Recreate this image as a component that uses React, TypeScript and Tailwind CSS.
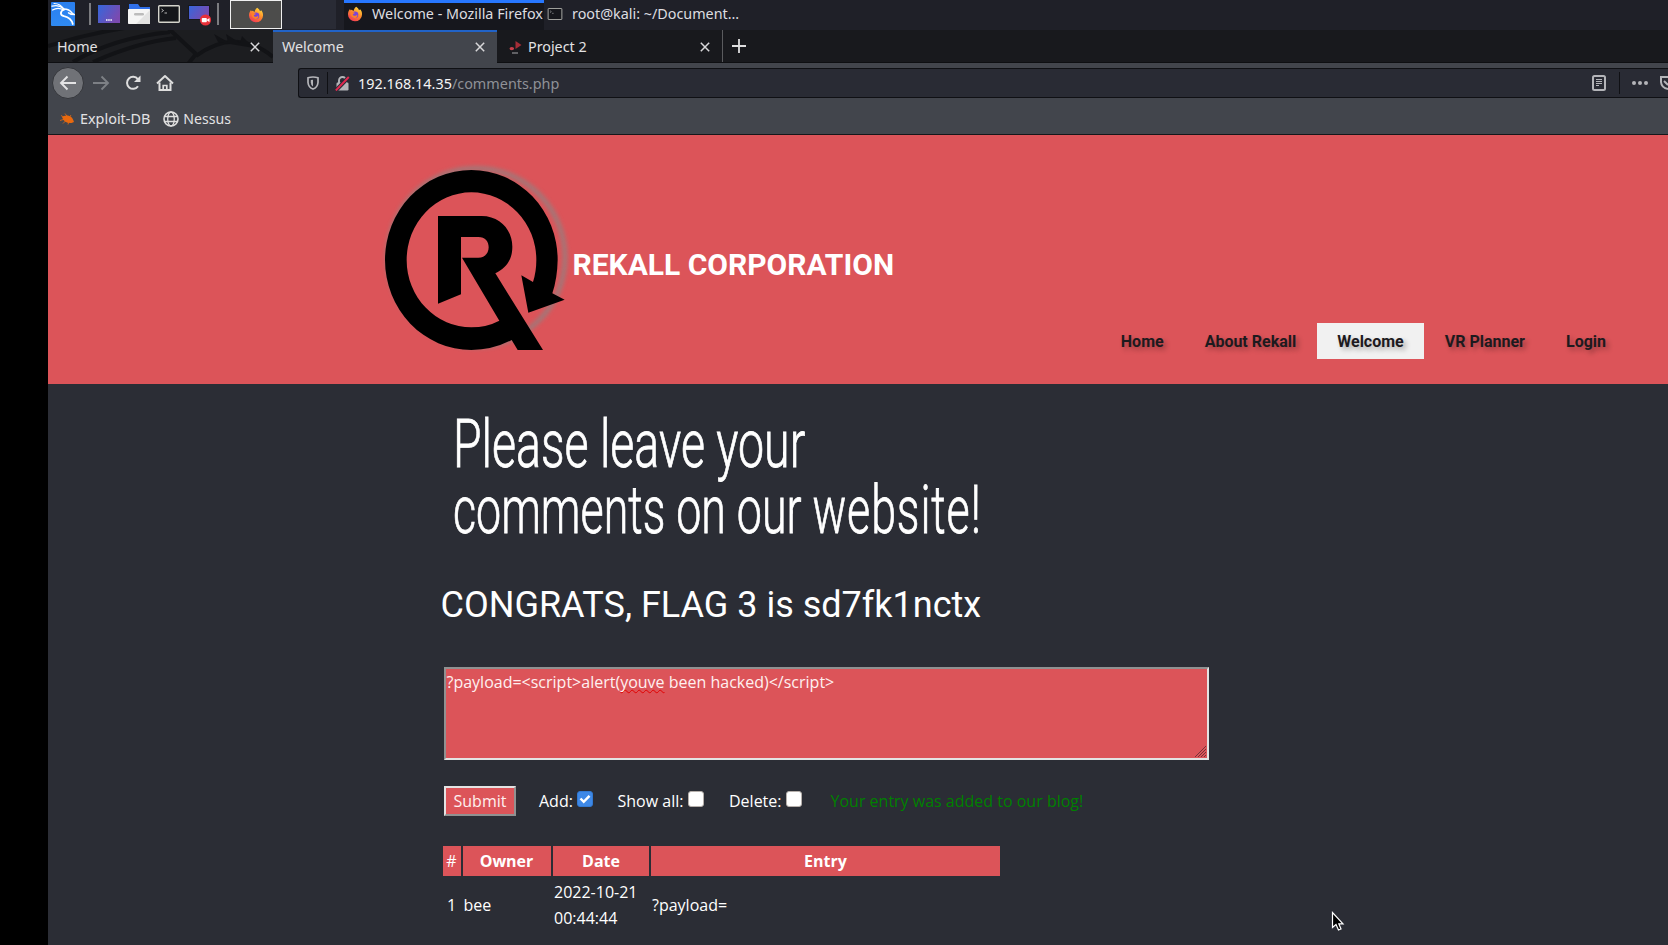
import React from "react";

const UI = "font-['Noto_Sans',sans-serif]";

function Kali() {
  return (
    <svg width="24" height="24" viewBox="0 0 24 24" className="shrink-0">
      <defs>
        <linearGradient id="kb" x1="0" y1="0" x2="0" y2="1">
          <stop offset="0" stopColor="#2a7fee" />
          <stop offset="1" stopColor="#2f8af5" />
        </linearGradient>
      </defs>
      <rect width="24" height="24" rx="1" fill="url(#kb)" />
      <g fill="none" stroke="#fff" strokeLinecap="round">
        <path d="M1 4.2C5 3 9 3.5 12.5 6.5" strokeWidth="1.3" />
        <path d="M3 1.5C8 1.5 11 4 13 7.5" strokeWidth="1.1" />
        <path d="M1.5 8C5.5 5.5 9.5 6 13 8" strokeWidth="1.3" />
        <path d="M12.8 7.5C9 9.5 8.8 13 13 14.2C17.5 15.3 20.5 17 21.8 22" strokeWidth="1.8" />
        <path d="M12 7C16 6.8 19 8 21 11L23 12.5L20 12.2L17.5 10.8" strokeWidth="1.5" />
      </g>
    </svg>
  );
}

function Desktop({ rec = false }: { rec?: boolean }) {
  return (
    <svg width="24" height="24" viewBox="0 0 24 24" className="shrink-0">
      <defs>
        <linearGradient id="dk" x1="0" y1="0" x2="1" y2="0.5">
          <stop offset="0" stopColor="#3567dc" />
          <stop offset="1" stopColor="#7a4ab0" />
        </linearGradient>
      </defs>
      {rec ? (
        <>
          <rect x=".5" y="3.500" width="21" height="14" fill="url(#dk)" stroke="#16171d" />
          <circle cx="17.500" cy="18" r="5.600" fill="#e8303a" />
          <rect x="13.800" y="16" width="5" height="4.200" rx=".8" fill="#fff" />
          <path d="M18.500 18L21.500 16V20.200Z" fill="#fff" />
        </>
      ) : (
        <>
          <rect y="3" width="22" height="18" fill="url(#dk)" />
          <path d="M8 18h6" stroke="#fff" strokeWidth="1.6" strokeDasharray="1.500 .7" />
        </>
      )}
    </svg>
  );
}

function Folder() {
  return (
    <svg width="24" height="24" viewBox="0 0 24 24" className="shrink-0">
      <path d="M1 2h9l2 3h10v5H1z" fill="#2f6fe8" />
      <rect y="7" width="22" height="15" rx=".8" fill="#f5f5f5" />
      <path d="M22 8v14H8z" fill="#e3e3e3" />
      <rect x="6" y="11" width="10" height="2.500" rx="1.200" fill="#bcbcbc" />
    </svg>
  );
}

function Term({ w, h }: { w: number; h: number }) {
  return (
    <svg width={w} height={h} viewBox="0 0 22 18" className="shrink-0">
      <rect x=".7" y=".7" width="20.600" height="16.600" rx=".8" fill="#14161a" stroke="#d4d4cc" strokeWidth="1.400" />
      <path d="M3.500 4l2 1.500l-2 1.500M6.500 8h2.500" fill="none" stroke="#c8c8c8" strokeWidth=".9" />
    </svg>
  );
}

function Firefox() {
  return (
    <svg width="16" height="16" viewBox="0 0 16 16" className="shrink-0">
      <defs>
        <linearGradient id="ff" x1=".8" y1="0" x2=".2" y2="1">
          <stop offset="0" stopColor="#ffe13e" />
          <stop offset=".45" stopColor="#ff8a2a" />
          <stop offset="1" stopColor="#f0325a" />
        </linearGradient>
      </defs>
      <path d="M9.200 .8C11 2 11.800 3.300 12 4.200C12.800 4 13 3.500 12.900 3C14.500 4.600 15.200 6.500 15 8.700A7 6.700 0 0 1 1 8.500C.9 6.500 1.700 4.400 3 2.900L3.500 4.300L4.800 3.800L6.500 5C7 3.200 7.800 1.800 9.200 .8Z" fill="url(#ff)" />
      <circle cx="8" cy="8.800" r="3.300" fill="#7a45d8" />
      <path d="M3.500 6.500C5 5.500 6.500 6 7.800 6.700C7.500 8 5.800 7.500 5.800 8.700C7 10.500 9.500 10 10 8.500C11 10 9.500 12.200 7.500 12C5 11.800 3.400 9.500 3.500 6.500Z" fill="#ff8226" />
    </svg>
  );
}

function Close() {
  return (
    <svg width="10" height="10" viewBox="0 0 10 10" className="shrink-0">
      <path d="M.8 .8l8.400 8.400M9.200 .8L.8 9.200" stroke="#d8d8da" strokeWidth="1.500" />
    </svg>
  );
}

function TaskBar() {
  return (
    <div className="flex h-[30px] bg-[#1f2028] text-[14.35px] leading-[27px] text-[#dddde0]">
      <div className="flex w-[182px] pt-[2px] pl-[3px]">
        <Kali />
        <div className="mt-[1px] ml-[14px] h-[22px] w-[2px] bg-[#7b7c80]" />
        <div className="ml-[7px] flex gap-[6px]">
          <Desktop />
          <Folder />
          <div className="w-6 pt-[3px]">
            <Term w={22} h={18} />
          </div>
          <Desktop rec />
        </div>
        <div className="mt-[1px] ml-[5px] h-[22px] w-[2px] bg-[#7b7c80]" />
      </div>
      <div className="flex h-[29px] w-[52px] items-center justify-center border border-[#f0f0f0] bg-[#4c4c4b]">
        <Firefox />
      </div>
      <div className="h-[29px] w-[54px] bg-[#292b35]" />
      <div className="ml-2 flex w-[200px] border-t-[3px] border-[#2777ff] bg-[#16171d] pl-[3px]">
        <div className="mt-[3px]">
          <Firefox />
        </div>
        <span className="-mt-[3px] ml-[9px] whitespace-nowrap">Welcome - Mozilla Firefox</span>
      </div>
      <div className="flex pl-[3px]">
        <div className="mt-[8px] opacity-80">
          <Term w={16} h={12} />
        </div>
        <span className="ml-[9px] whitespace-nowrap">root@kali: ~/Document…</span>
      </div>
    </div>
  );
}

function Tabs() {
  return (
    <div className="flex h-[33px] border-b border-[#0e0f12] bg-[#18191d] text-[14.3px] leading-[33px] text-[#e2e2e4]">
      <div className="relative flex w-[225px] items-center justify-between overflow-hidden bg-[#1c1d20] pr-[13px] pl-[9px]">
        <svg className="absolute inset-0" width="225" height="32" viewBox="0 0 225 32" fill="none">
          <path d="M0 16Q45 2 90 -4M25 32Q65 8 122 2M45 32Q90 12 128 8M120 -2L148 24L140 34M148 26Q170 10 190 12Q210 14 225 27" stroke="#121316" strokeWidth="4" />
          <path d="M170 12l-4-8l14 8l-2-8l14 9l2-7l12 12" fill="#121316" />
        </svg>
        <span className="relative">Home</span>
        <span className="relative mt-px">
          <Close />
        </span>
      </div>
      <div className="-mb-px flex w-[224px] items-center justify-between border-t-2 border-[#2163c8] bg-[#42454c] pr-[12px] pl-[9px]">
        <span className="-mt-[2px]">Welcome</span>
        <span className="-mt-px">
          <Close />
        </span>
      </div>
      <div className="flex w-[226px] items-center border-r border-[#5a5b5e] pr-[12px] pl-[12px]">
        <svg width="14" height="14" viewBox="0 0 14 14" className="mt-1">
          <path d="M6.500 0L12.500 4L6.500 8Z" fill="#a52d37" />
          <ellipse cx="2.800" cy="7.600" rx="2.300" ry="1.700" fill="#c8404c" />
          <path d="M3 12h6" stroke="#a8a8ac" />
        </svg>
        <span className="ml-[5px]">Project 2</span>
        <span className="mt-px ml-auto">
          <Close />
        </span>
      </div>
      <svg width="14" height="14" viewBox="0 0 14 14" className="mt-[9px] ml-[9px]">
        <path d="M7 0v14M0 7h14" stroke="#dededf" strokeWidth="1.800" />
      </svg>
    </div>
  );
}

function Toolbar() {
  return (
    <div className="flex h-[40px] items-center bg-[#42454c] pl-1">
      <div className="flex h-8 w-8 items-center justify-center rounded-full border border-[#34363b] bg-[#707277]">
        <svg width="18" height="16" viewBox="0 0 18 16" fill="none" stroke="#e4e4e5" strokeWidth="1.900">
          <path d="M17 8H2M8.500 1.500L2 8l6.500 6.500" />
        </svg>
      </div>
      <svg width="18" height="16" viewBox="0 0 18 16" className="ml-[8px]" fill="none" stroke="#7d8085" strokeWidth="1.900">
        <path d="M1 8h15M9.500 1.500L16 8l-6.500 6.500" />
      </svg>
      <svg width="18" height="16" viewBox="0 0 18 16" className="ml-[15px]" fill="none" stroke="#dedede" strokeWidth="2">
        <path d="M13 11.200A6 6 0 1 1 12.800 4.200" />
        <path d="M15.500 .5V7H9z" fill="#dedede" stroke="none" />
      </svg>
      <svg width="18" height="18" viewBox="0 0 18 18" className="ml-[13px]" fill="none" stroke="#dedede" strokeWidth="2">
        <path d="M1 9.500L9 2l8 7.500" strokeLinejoin="round" />
        <path d="M3.500 8.500V16h11V8.500" />
        <path d="M7.200 17v-5.500h3.600V17" strokeWidth="1.700" />
      </svg>
      <div className="ml-[124px] flex h-[30px] flex-1 items-center rounded-l-[3px] border border-r-0 border-[#0f1014] bg-[#292b34]">
        <svg width="12" height="14" viewBox="0 0 12 14" className="ml-[8px]" fill="none" stroke="#b4b5b9" strokeWidth="1.700">
          <path d="M1 1.800Q6 .2 11 1.800V6.500Q10.500 11.500 6 13Q1.500 11.500 1 6.500Z" />
          <path d="M6 3.800V10.500Q3.800 9 3.800 6.500V4.100Z" fill="#b4b5b9" stroke="none" />
        </svg>
        <div className="ml-[8px] h-[22px] w-px bg-[#0f1014]" />
        <svg width="15" height="15" viewBox="0 0 15 15" className="ml-[7px]">
          <rect x="1.500" y="6.500" width="12" height="8" rx="1.200" fill="#b4b5b9" />
          <path d="M4 7V4.500a3.500 3.500 0 0 1 7 0V7" fill="none" stroke="#b4b5b9" strokeWidth="1.900" />
          <path d="M.8 14.500L13.800 1" stroke="#292b34" strokeWidth="4" />
          <path d="M.8 14.500L13.800 1" stroke="#e22850" strokeWidth="1.900" />
        </svg>
        <span className="mt-[2px] ml-[8px] text-[14.4px] text-[#8f9197]">
          <span className="text-[#f4f4f5]">192.168.14.35</span>/comments.php
        </span>
        <svg width="14" height="16" viewBox="0 0 14 16" className="ml-auto" fill="none" stroke="#b4b5b9">
          <rect x="1" y="1" width="12" height="14" rx="1.500" strokeWidth="2" />
          <path d="M4 4.500h6M4 6.500h6M4 8.500h6M4 10.500h3" />
        </svg>
        <div className="ml-[13px] h-[22px] w-px bg-[#0f1014]" />
        <svg width="16" height="4" viewBox="0 0 16 4" className="ml-[12px]" fill="#b4b5b9">
          <circle cx="2" cy="2" r="2" />
          <circle cx="8" cy="2" r="2" />
          <circle cx="14" cy="2" r="2" />
        </svg>
        <svg width="8" height="14" viewBox="0 0 8 14" className="ml-[12px]" fill="none" stroke="#b4b5b9" strokeWidth="2">
          <path d="M9 1H1V6Q1.500 12 8 13" />
          <path d="M4 5l4 4" />
        </svg>
      </div>
    </div>
  );
}

function Bookmarks() {
  return (
    <div className="flex h-[32px] items-center border-b border-[#16171a] bg-[#42454c] pl-[12px] text-[14.4px] leading-[31px] text-[#e2e2e4]">
      <svg width="15" height="12" viewBox="0 0 15 12" fill="#e8690f">
        <path d="M2 4Q4 2 8 2.500Q12 3.500 13 6.500L14 9L11.500 10Q8 10.500 5 8.500Q3 7 2 4Z" />
        <path d="M1 2.500L12 9M5 .5l3 4M0 7.500l5-1.500M3 10.500l3-3M11 2l-2 3M8 11.500l1-3" stroke="#e8690f" strokeWidth=".8" />
      </svg>
      <span className="ml-[5px]">Exploit-DB</span>
      <svg width="16" height="16" viewBox="0 0 16 16" className="ml-[13px]" fill="none" stroke="#dedede" strokeWidth="1.600">
        <circle cx="8" cy="8" r="7" />
        <ellipse cx="8" cy="8" rx="3.300" ry="7" strokeWidth="1.300" />
        <path d="M1.500 5.500h13M1.500 10.500h13" strokeWidth="1.300" />
      </svg>
      <span className="ml-[4px] text-[14.1px]">Nessus</span>
    </div>
  );
}

function Logo() {
  return (
    <svg width="220" height="220" viewBox="0 0 660 660" className="shrink-0">
      <defs>
        <filter id="soft" x="-10%" y="-10%" width="120%" height="120%">
          <feGaussianBlur stdDeviation="6" />
        </filter>
      </defs>
      <ellipse cx="319" cy="322" rx="266" ry="267" fill="none" stroke="#8b8585" strokeWidth="13" filter="url(#soft)" opacity=".8" />
      <path
        d="M45 330A259 270 0 0 1 304 60A259 270 0 0 1 563 330Q562 385 547 430L584 449L475 488L454 376L489 396Q499 365 499 330A195 203 0 0 0 304 127A194 203 0 0 0 110 330A194 202 0 0 0 304 532Q350 532 388 512L276 323H325C346 323 356 308 356 292C356 274 346 261 325 261H273V433L204 461V198H335C390 198 427 240 427 290C427 330 408 355 376 370L519 600H443L425 570Q368 600 304 600A259 270 0 0 1 45 330Z"
        fill="#000"
      />
    </svg>
  );
}

const nav = ["Home", "About Rekall", "Welcome", "VR Planner", "Login"];

function Header() {
  return (
    <header className="flex h-[249px] flex-col bg-[#dc5459] font-[Roboto,sans-serif]">
      <div className="flex h-[188px] pt-[15px] pl-[322px]">
        <div className="h-[173px] w-[202.5px]">
          <Logo />
        </div>
        <h1 className="mt-[95px] text-[30px] leading-[40px] font-bold whitespace-nowrap text-white">REKALL CORPORATION</h1>
      </div>
      <nav className="relative flex justify-end gap-px pr-[42px] text-[16px] leading-[37px] font-bold text-[#1d1a1e] [text-shadow:3px_3px_5px_rgba(0,0,0,0.3)]">
        {nav.map((n) => (
          <span key={n} className={n === "Welcome" ? "h-[36px] bg-[#f1f1f1] px-5" : "h-[36px] px-5"}>
            {n}
          </span>
        ))}
      </nav>
    </header>
  );
}

function Box({ on = false }: { on?: boolean }) {
  return (
    <svg width="16" height="16" viewBox="0 0 16 16" className="-mt-[4px] shrink-0">
      <rect x=".5" y=".5" width="15" height="15" rx="2.500" fill={on ? "#3e88e6" : "#fff"} stroke={on ? "#3279d2" : "#b5afab"} />
      {on && <path d="M3.500 7.500l3.200 3.300L12.500 4.800" fill="none" stroke="#fff" strokeWidth="2.500" />}
    </svg>
  );
}

function Content() {
  return (
    <main className="flex flex-1 flex-col bg-[#2b2d35] pl-[395px] font-['Open_Sans',sans-serif] text-[16px] text-white">
      <h2 className="mt-[28px] ml-[10px] font-[Roboto,sans-serif] text-[66px] leading-[66px] font-light whitespace-nowrap [-webkit-text-stroke:0.8px_white]">
        <span className="block origin-left scale-x-[0.704]">Please leave your</span>
        <span className="block origin-left scale-x-[0.678]">
          comments on our <span className="tracking-[1.3px]">website!</span>
        </span>
      </h2>
      <p className="mt-[40px] -ml-[2.5px] font-[Roboto,sans-serif] text-[36px] leading-[42px] whitespace-nowrap">
        CONGRATS, FLAG 3 is sd7fk1nctx
      </p>
      <div className="mt-[41px] ml-px flex h-[93px] w-[765px] border-2 border-t-[#919191] border-r-[#e3e3e3] border-b-[#e3e3e3] border-l-[#919191] bg-[#dc5459] leading-[26px] whitespace-nowrap text-[#fff0f0]">
        <span className="pl-[0.5px]">?payload=&lt;script&gt;alert(</span>
        <span className="underline decoration-[#e00000] decoration-wavy decoration-1 underline-offset-[1px] [text-decoration-skip-ink:none]">youve</span>
        <span>&nbsp;been hacked)&lt;/script&gt;</span>
        <svg width="11" height="11" viewBox="0 0 11 11" className="mt-auto mr-[1px] mb-[1px] ml-auto" stroke="#6b3035" strokeWidth=".9">
          <path d="M0 11L11 0M3 11L11 3M6 11L11 6M9 11L11 9" />
        </svg>
      </div>
      <div className="mt-[26px] ml-px flex h-[30px] items-center whitespace-nowrap">
        <button className="h-[30px] w-[72px] border-2 border-t-[#e3e3e3] border-r-[#919191] border-b-[#919191] border-l-[#e3e3e3] bg-[#dc5459] leading-[26px] text-[#fff0f0]">
          Submit
        </button>
        <label className="ml-[23px] flex w-[78.500px] items-center gap-[4px]">
          Add: <Box on />
        </label>
        <label className="flex w-[111.500px] items-center gap-[4.500px]">
          Show all: <Box />
        </label>
        <label className="flex w-[101.500px] items-center gap-[4px]">
          Delete: <Box />
        </label>
        <span className="text-[#008000]">Your entry was added to our blog!</span>
      </div>
      <div className="mt-[30px] grid w-[557px] grid-cols-[18px_88px_96px_349px] gap-x-[2px] gap-y-[3px]">
        <div className="bg-[#dc5459] pr-px text-center leading-[30px]">#</div>
        <div className="bg-[#dc5459] pr-px text-center leading-[30px] font-bold">Owner</div>
        <div className="bg-[#dc5459] text-center leading-[30px] font-bold">Date</div>
        <div className="bg-[#dc5459] text-center leading-[30px] font-bold">Entry</div>
        <div className="self-center pr-px text-center leading-[26px]">1</div>
        <div className="self-center pl-[0.5px] leading-[26px]">bee</div>
        <div className="pl-px leading-[26px]">
          2022-10-21
          <br />
          00:44:44
        </div>
        <div className="self-center pl-px leading-[26px]">?payload=</div>
      </div>
    </main>
  );
}

export default function App() {
  return (
    <div className={`relative flex h-[945px] w-[1668px] overflow-hidden bg-black ${UI}`}>
      <div className="w-12 shrink-0" />
      <div className="flex min-w-0 flex-1 flex-col">
        <TaskBar />
        <Tabs />
        <Toolbar />
        <Bookmarks />
        <Header />
        <Content />
      </div>
      <svg width="14" height="22" viewBox="0 0 14 22" className="absolute top-[911px] left-[1331px]">
        <path d="M1.500 1.500V16.500L5 13.500L7.500 19L10 18L7.800 12.800H12Z" fill="#000" stroke="#fff" strokeWidth="1.200" />
      </svg>
    </div>
  );
}
